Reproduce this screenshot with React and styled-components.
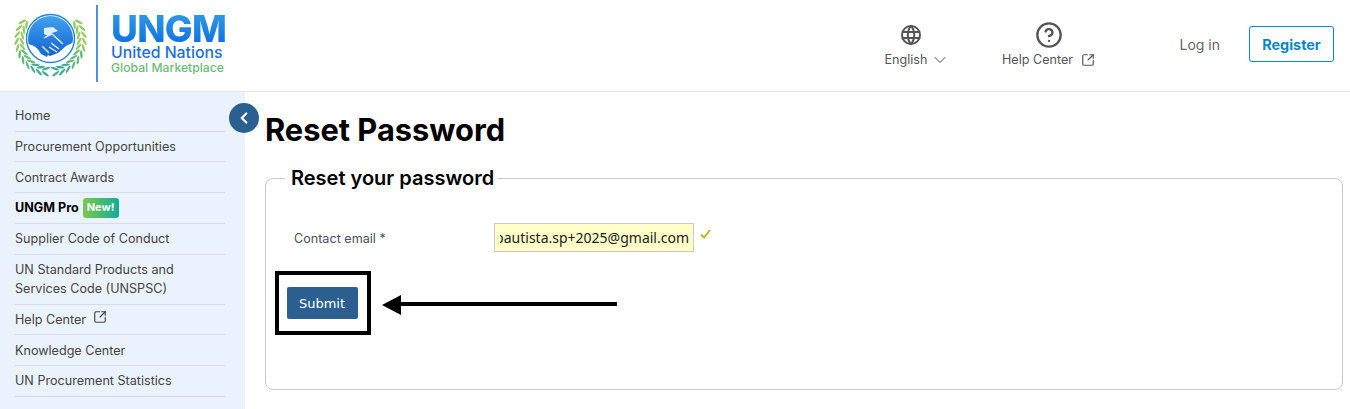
import React from "react";
import styled, { createGlobalStyle } from "styled-components";
import { CircleHelp, ChevronDown, ChevronLeft, SquareArrowOutUpRight } from "lucide-react";
import { TbWorld } from "react-icons/tb";

const GlobalStyle = createGlobalStyle`
  html, body {
    margin: 0;
    padding: 0;
    background: #fff;
    font-family: Inter, "Liberation Sans", sans-serif;
    overflow: hidden;
  }
  * { box-sizing: border-box; }
`;

const Header = styled.header`
  height: 92px;
  border-bottom: 1px solid #e6e6e6;
  display: flex;
  align-items: flex-start;
`;

const Brand = styled.div`
  display: flex;
  align-items: flex-start;
  padding: 5px 0 0 14px;
`;

const Divider = styled.div`
  width: 2px;
  height: 77px;
  margin: 0 13px 0 9px;
  background: #4a90e8;
`;

const BrandText = styled.div`
  display: flex;
  flex-direction: column;
  padding-top: 7px;
`;

const BrandName = styled.div`
  font-size: 37px;
  font-weight: 800;
  line-height: 33px;
  letter-spacing: -0.7px;
  background: linear-gradient(180deg, #2f9ce6, #0f6fe0);
  -webkit-background-clip: text;
  background-clip: text;
  color: transparent;
`;

const BrandLine = styled.div`
  font-size: 15.8px;
  font-weight: 500;
  line-height: 16px;
  color: #1c6fdc;
`;

const BrandSub = styled.div`
  font-size: 12.2px;
  font-weight: 500;
  line-height: 14px;
  color: #6dbb7a;
`;

const HeaderRight = styled.div`
  margin-left: auto;
  display: flex;
  align-items: flex-start;
  padding: 22px 16px 0 0;
`;

const HeaderItem = styled.div`
  width: ${(p) => p.$width}px;
  margin-right: ${(p) => p.$gap}px;
  display: flex;
  flex-direction: column;
  align-items: center;
  gap: 4px;
  font-size: 12.6px;
`;

const IconSlot = styled.div`
  height: 26px;
  margin-right: ${(p) => p.$shift || 0}px;
  display: flex;
  align-items: center;
  color: #555;
`;

const ItemLabel = styled.div`
  height: 16px;
  display: flex;
  align-items: center;
  gap: ${(p) => p.$gap}px;
  line-height: 16px;
  white-space: nowrap;
  color: #555;
`;

const LoginLink = styled.a`
  margin: 14px 29px 0 0;
  font-size: 14px;
  line-height: 18px;
  color: #666;
`;

const RegisterButton = styled.button`
  width: 85px;
  height: 36px;
  margin-top: 4px;
  padding: 0;
  background: #fff;
  border: 1px solid #0b87c9;
  border-radius: 3px;
  color: #0b87c9;
  font-family: inherit;
  font-size: 14.4px;
  font-weight: 700;
`;

const Body = styled.div`
  display: flex;
  position: relative;
  height: 317px;
`;

const Sidebar = styled.nav`
  width: 245px;
  flex-shrink: 0;
  background: #eaf3fd;
  padding: 9px 20px 0 15px;
`;

const NavItem = styled.div`
  display: flex;
  align-items: center;
  gap: ${(p) => (p.$bold ? 4 : 7)}px;
  min-height: ${(p) => p.$height}px;
  padding-bottom: ${(p) => (p.$flush ? 0 : 1)}px;
  border-bottom: 1px solid #d9dde2;
  font-size: 12.6px;
  line-height: 19px;
  color: ${(p) => (p.$bold ? "#000" : "#444")};
  font-weight: ${(p) => (p.$bold ? 700 : 400)};

  svg {
    margin-top: -4px;
  }
`;

const NewBadge = styled.span`
  padding: 0 4px;
  height: 20px;
  display: inline-flex;
  align-items: center;
  border-radius: 3px;
  background: linear-gradient(90deg, #7cc84a, #0fae9c);
  color: #fff;
  font-size: 11px;
  font-weight: 700;
`;

const CollapseToggle = styled.button`
  position: absolute;
  left: 229px;
  top: 11px;
  width: 30px;
  height: 30px;
  padding: 0;
  border: none;
  border-radius: 50%;
  background: #2a5f90;
  color: #fff;
  display: flex;
  align-items: center;
  justify-content: center;
`;

const Main = styled.main`
  flex: 1;
  padding: 0 7px 0 20px;
`;

const Title = styled.h1`
  margin: 18px 0 16px;
  font-size: 30.8px;
  font-weight: 700;
  line-height: 40px;
  color: #000;
`;

const Panel = styled.fieldset`
  margin: 0;
  height: 224px;
  padding: 0 0 0 9px;
  border: 1px solid #ccc;
  border-radius: 8px;
  min-inline-size: 0;
`;

const PanelLegend = styled.legend`
  margin-left: 10px;
  padding: 0 4px 0 6px;
  font-size: 20px;
  font-weight: 600;
  line-height: 24px;
  color: #000;
`;

const FieldRow = styled.div`
  display: flex;
  align-items: flex-start;
  padding-top: 33px;
`;

const FieldLabel = styled.label`
  width: 219px;
  padding: 8px 0 0 19px;
  font-size: 12.6px;
  line-height: 16px;
  color: #4a5260;
`;

const EmailField = styled.div`
  width: 200px;
  height: 29px;
  padding: 0 4px 0 5px;
  background: #ffffc8;
  border: 1px solid #ccc;
  display: flex;
  align-items: center;
`;

const EmailClip = styled.div`
  width: 100%;
  overflow: hidden;
  display: flex;
  justify-content: flex-end;
  font-family: "Noto Sans", sans-serif;
  font-size: 14px;
  line-height: 20px;
  white-space: nowrap;
  color: #222;
`;

const CheckMark = styled.svg`
  margin: 6px 0 0 6px;
`;

const ActionRow = styled.div`
  display: flex;
  align-items: center;
  margin-top: 19px;
`;

const Highlight = styled.div`
  width: 96px;
  height: 64px;
  padding-right: 2px;
  border: 4px solid #000;
  display: flex;
  align-items: center;
  justify-content: center;
  margin-right: 11px;
`;

const SubmitButton = styled.button`
  width: 71px;
  height: 32px;
  padding: 0;
  border: none;
  border-radius: 2px;
  background: #2a5f90;
  color: #fff;
  font-family: "DejaVu Sans", sans-serif;
  font-size: 13px;
`;

const navItems = [
  { label: "Home", height: 31 },
  { label: "Procurement Opportunities", height: 30 },
  { label: "Contract Awards", height: 31, flush: true },
  { label: "UNGM Pro", bold: true, badge: true, height: 31 },
  { label: "Supplier Code of Conduct", height: 31 },
  { label: "UN Standard Products and Services Code (UNSPSC)", height: 50 },
  { label: "Help Center", external: true, height: 30 },
  { label: "Knowledge Center", height: 31, flush: true },
  { label: "UN Procurement Statistics", height: 31 },
];

// leaf pairs along one branch of the wreath, top to bottom
const leaves = [0, 1, 2, 3, 4, 5, 6, 7, 8, 9, 10].flatMap((i) => {
  const deg = 214 - i * 11.5;
  const a = (deg * Math.PI) / 180;
  const r = 31.5 - i * 0.1;
  const x = 50.5 + Math.cos(a) * r;
  const y = 41 + Math.sin(a) * r;
  const tangent = deg - 90;
  const color = i < 5 ? "#93cb5e" : i < 8 ? "#62bb78" : "#3fae92";
  return [
    { x: x + Math.cos(a) * 2.6, y: y + Math.sin(a) * 2.6, rot: tangent + 28, color },
    { x: x - Math.cos(a) * 2.6, y: y - Math.sin(a) * 2.6, rot: tangent - 28, color },
  ];
});

const Wreath = ({ flip }) => (
  <g transform={flip ? "translate(101 0) scale(-1 1)" : undefined}>
    {leaves.map((l, i) => (
      <ellipse
        key={i}
        cx={l.x}
        cy={l.y}
        rx="4.2"
        ry="1.2"
        transform={`rotate(${l.rot} ${l.x} ${l.y})`}
        fill={l.color}
      />
    ))}
  </g>
);

const Logo = () => (
  <svg width="73" height="72" viewBox="14 5 73 72">
    <defs>
      <linearGradient id="dome" x1="0" y1="0" x2="0" y2="1">
        <stop offset="0" stopColor="#43a5ee" />
        <stop offset="1" stopColor="#1264d6" />
      </linearGradient>
      <clipPath id="disc">
        <circle cx="50.5" cy="38.5" r="22.5" />
      </clipPath>
    </defs>
    <Wreath />
    <Wreath flip />
    <circle cx="50.5" cy="38.5" r="24" fill="#fff" stroke="#1f86e6" strokeWidth="1.4" />
    <g clipPath="url(#disc)">
      <path d="M26 14 H76 V41 L66 46 L58 53 L50 56 L42 52 L34 46 L26 43 Z" fill="url(#dome)" />
      <path d="M44 28 L53 27 L58 31 L52 33 L48 36 L44 34 Z" fill="#fff" opacity="0.85" />
      <path d="M36 46 L44 44 L50 50 L47 57 L41 54 Z" fill="#1a6fdc" />
      <path d="M44 38 L52 34 L63 44 M49 47 L57 52 M51 43 L59 49 M42 46 L49 53" fill="none" stroke="#fff" strokeWidth="1.1" />
    </g>
  </svg>
);

const App = () => {
  return (
    <>
      <GlobalStyle />
      <Header>
        <Brand>
          <Logo />
          <Divider />
          <BrandText>
            <BrandName>UNGM</BrandName>
            <BrandLine>United Nations</BrandLine>
            <BrandSub>Global Marketplace</BrandSub>
          </BrandText>
        </Brand>
        <HeaderRight>
          <HeaderItem $width={66} $gap={52}>
            <IconSlot $shift={14}>
              <TbWorld size={24} />
            </IconSlot>
            <ItemLabel $gap={3}>
              English <ChevronDown size={20} strokeWidth={1.4} color="#999" />
            </ItemLabel>
          </HeaderItem>
          <HeaderItem $width={92} $gap={85}>
            <IconSlot>
              <CircleHelp size={28} strokeWidth={2} />
            </IconSlot>
            <ItemLabel $gap={8}>
              Help Center <SquareArrowOutUpRight size={14} />
            </ItemLabel>
          </HeaderItem>
          <LoginLink>Log in</LoginLink>
          <RegisterButton>Register</RegisterButton>
        </HeaderRight>
      </Header>
      <Body>
        <Sidebar>
          {navItems.map((it) => (
            <NavItem key={it.label} $bold={it.bold} $height={it.height} $flush={it.flush}>
              {it.label}
              {it.badge && <NewBadge>New!</NewBadge>}
              {it.external && <SquareArrowOutUpRight size={14} />}
            </NavItem>
          ))}
        </Sidebar>
        <CollapseToggle aria-label="Collapse menu">
          <ChevronLeft size={18} strokeWidth={3} />
        </CollapseToggle>
        <Main>
          <Title>Reset Password</Title>
          <Panel>
            <PanelLegend>Reset your password</PanelLegend>
            <FieldRow>
              <FieldLabel>Contact email *</FieldLabel>
              <EmailField>
                <EmailClip>bautista.sp+2025@gmail.com</EmailClip>
              </EmailField>
              <CheckMark width="11" height="10" viewBox="0 0 11 10">
                <path d="M1 5.5 L4 8.5 L10 1" fill="none" stroke="#b4ba22" strokeWidth="2" />
              </CheckMark>
            </FieldRow>
            <ActionRow>
              <Highlight>
                <SubmitButton>Submit</SubmitButton>
              </Highlight>
              <svg width="236" height="26" viewBox="0 0 236 26">
                <path d="M0 15 L19 5 V25 Z" fill="#000" />
                <path d="M18 14 H235" stroke="#000" strokeWidth="4" />
              </svg>
            </ActionRow>
          </Panel>
        </Main>
      </Body>
    </>
  );
};

export default App;
